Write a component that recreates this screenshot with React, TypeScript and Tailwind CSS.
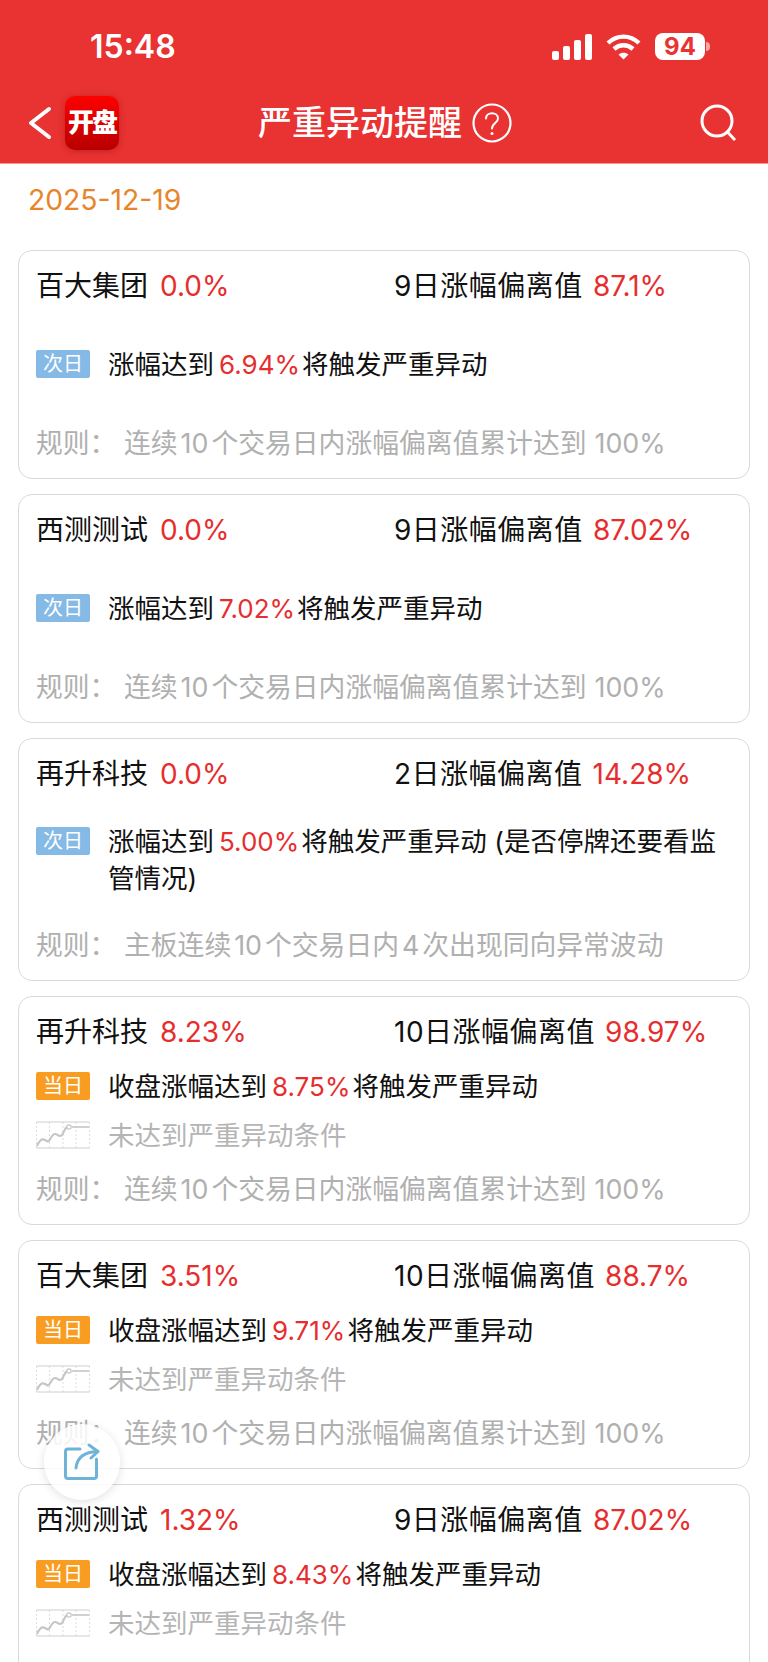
import React from 'react';

type Item = {
  name: string;
  pct: string;
  label: string;
  dev: string;
  kind: 'next' | 'today';
  prefix: string;
  target: string;
  suffix: string;
  rule: React.ReactNode;
};

const Gap: React.FC<{ children: React.ReactNode }> = ({ children }) => (
  <span className="mx-[3px]">{children}</span>
);

const defaultRule = (
  <>
    连续<Gap>10</Gap>个交易日内涨幅偏离值累计达到<span className="ml-[8px]">100%</span>
  </>
);

const items: Item[] = [
  { name: '百大集团', pct: '0.0%', label: '9日涨幅偏离值', dev: '87.1%', kind: 'next', prefix: '涨幅达到', target: '6.94%', suffix: '将触发严重异动', rule: defaultRule },
  { name: '西测测试', pct: '0.0%', label: '9日涨幅偏离值', dev: '87.02%', kind: 'next', prefix: '涨幅达到', target: '7.02%', suffix: '将触发严重异动', rule: defaultRule },
  {
    name: '再升科技', pct: '0.0%', label: '2日涨幅偏离值', dev: '14.28%', kind: 'next', prefix: '涨幅达到', target: '5.00%', suffix: '将触发严重异动 (是否停牌还要看监管情况)',
    rule: <>主板连续<Gap>10</Gap>个交易日内<Gap>4</Gap>次出现同向异常波动</>,
  },
  { name: '再升科技', pct: '8.23%', label: '10日涨幅偏离值', dev: '98.97%', kind: 'today', prefix: '收盘涨幅达到', target: '8.75%', suffix: '将触发严重异动', rule: defaultRule },
  { name: '百大集团', pct: '3.51%', label: '10日涨幅偏离值', dev: '88.7%', kind: 'today', prefix: '收盘涨幅达到', target: '9.71%', suffix: '将触发严重异动', rule: defaultRule },
  { name: '西测测试', pct: '1.32%', label: '9日涨幅偏离值', dev: '87.02%', kind: 'today', prefix: '收盘涨幅达到', target: '8.43%', suffix: '将触发严重异动', rule: defaultRule },
];

const MiniChart = () => (
  <svg width="54" height="28" viewBox="0 0 54 28" fill="none" className="shrink-0">
    <path d="M0.5 1H53.5M0.5 27H53.5" stroke="#cfcfcf" strokeWidth="1.2" />
    <path d="M0.5 1V27M13.5 1V27M27 1V27M40 1V27M53.5 1V27" stroke="#d4d4d4" strokeWidth="0.8" strokeDasharray="2 2" />
    <path d="M1 25C5 16 8 18 11 20C14 22 15 13 19 13C22 13 23 17 26 14C28 11 29 7 31 6" stroke="#c6c6c6" strokeWidth="2.2" />
    <circle cx="33" cy="6" r="2.2" stroke="#c6c6c6" strokeWidth="1.2" fill="#fff" />
    <path d="M36 6H53" stroke="#c6c6c6" strokeWidth="1.6" />
  </svg>
);

const Card: React.FC<{ item: Item }> = ({ item }) => (
  <div className="rounded-[14px] border border-[#d9d9d9] bg-white pl-[17px] pr-[30px] pt-[17px] pb-[17px] text-[26.5px] leading-[36px] text-[#111]">
    <div className="flex h-[36px] items-center whitespace-nowrap text-[28px]">
      <div className="flex w-[358px] items-center gap-[12px]">
        <span>{item.name}</span>
        <span className="text-[#e62e2e]">{item.pct}</span>
      </div>
      <div className="flex items-center gap-[10px]">
        <span className="tracking-[0.5px]">{item.label}</span>
        <span className="text-[#e62e2e]">{item.dev}</span>
      </div>
    </div>
    <div
      className={
        item.kind === 'next'
          ? 'flex min-h-[121px] flex-col justify-center gap-[12px] py-[31px]'
          : 'flex min-h-[121px] flex-col justify-center gap-[12px]'
      }
    >
      <div className="flex items-start">
        <span
          className={
            item.kind === 'next'
              ? 'mt-[4px] mr-[18px] flex h-[28px] w-[54px] shrink-0 items-center justify-center rounded-[2px] bg-[#85b9e6] text-[20px] leading-none text-white'
              : 'mt-[4px] mr-[18px] flex h-[28px] w-[54px] shrink-0 items-center justify-center rounded-[2px] bg-[#f99d22] text-[20px] leading-none text-white'
          }
        >
          {item.kind === 'next' ? '次日' : '当日'}
        </span>
        <div>
          {item.prefix}
          <span className="ml-[5px] mr-[2px] text-[26px] text-[#e62e2e]">{item.target}</span>
          {item.suffix}
        </div>
      </div>
      {item.kind === 'today' && (
        <div className="flex items-center text-[#b5b5b5]">
          <span className="mr-[18px] flex">
            <MiniChart />
          </span>
          <span>未达到严重异动条件</span>
        </div>
      )}
    </div>
    <div className="flex h-[36px] items-center whitespace-nowrap text-[26.8px] text-[#b0b0b0]">
      <span className="w-[88px] shrink-0">规则：</span>
      <span>{item.rule}</span>
    </div>
  </div>
);

const App: React.FC = () => {
  return (
    <div
      className="relative h-[1662px] w-[768px] overflow-hidden bg-white"
      style={{ fontFamily: 'Inter, "Noto Sans CJK SC", sans-serif' }}
    >
      <header className="h-[164px] border-b border-[#f29a9a] bg-[#e93232] text-white">
        <div className="flex h-[90px] items-center justify-between pt-[3px] pl-[90px] pr-[58px]">
          <span className="text-[32px] font-semibold leading-none">15:48</span>
          <div className="flex items-center gap-[14px]">
            <svg width="40" height="26" viewBox="0 0 40 26" fill="#fff">
              <rect x="0" y="17" width="7" height="9" rx="2" />
              <rect x="11" y="12" width="7" height="14" rx="2" />
              <rect x="22" y="6" width="7" height="20" rx="2" />
              <rect x="33" y="0" width="7" height="26" rx="2" />
            </svg>
            <svg width="35" height="26" viewBox="0 0 35 26" fill="none" stroke="#fff" strokeWidth="4.4">
              <path d="M2 9C11 0.5 24 0.5 33 9" />
              <path d="M8 15C13.5 10 21.5 10 27 15" />
              <path d="M17.5 25.5L12.5 20.5C15.5 18 19.5 18 22.5 20.5Z" fill="#fff" stroke="none" />
            </svg>
            <div className="flex items-center">
              <span className="flex h-[27px] w-[50px] items-center justify-center rounded-[8px] bg-white text-[24px] font-bold leading-none text-[#e93232]">
                94
              </span>
              <span className="ml-[1px] h-[9px] w-[4px] rounded-r-full bg-[#f5a5a5]" />
            </div>
          </div>
        </div>
        <div className="flex h-[73px] items-center pb-[7px] pl-[28px] pr-[32px]">
          <svg width="24" height="34" viewBox="0 0 24 34" fill="none" stroke="#fff" strokeWidth="4" strokeLinecap="round" strokeLinejoin="round" className="mr-[13px]">
            <path d="M21 3L3 17L21 31" />
          </svg>
          <div className="flex h-[54px] w-[54px] items-center justify-center rounded-[10px] bg-gradient-to-b from-[#ff0000] to-[#b80000] text-[26px] font-black leading-none tracking-[-2px] shadow-[0_1px_6px_rgba(120,0,0,0.35)]">
            开盘
          </div>
          <div className="ml-[139px] flex items-center">
            <span className="text-[34px] font-medium leading-none">严重异动提醒</span>
            <svg width="40" height="40" viewBox="0 0 40 40" fill="none" stroke="#fff" className="ml-[10px]">
              <circle cx="20" cy="20" r="18.5" strokeWidth="2.2" />
              <path d="M14 15.5C14 8.5 26 8.5 26 15.5C26 20 20 20 20 25.5" strokeWidth="2" strokeLinecap="round" />
              <circle cx="20" cy="30.5" r="1.5" fill="#fff" stroke="none" />
            </svg>
          </div>
          <svg width="36" height="38" viewBox="0 0 36 38" fill="none" stroke="#fff" strokeWidth="3" className="ml-auto">
            <circle cx="17" cy="17" r="15" />
            <path d="M27.5 28L34 35" strokeLinecap="square" />
          </svg>
        </div>
      </header>

      <div className="flex h-[70px] items-start pl-[28px] pt-[18px] text-[28.3px] leading-[36px] text-[#e8852a]">
        2025-12-19
      </div>

      <div className="flex flex-col gap-[15px] pl-[18px] pr-[18px] pt-[16px]">
        {items.map((item, i) => (
          <Card key={i} item={item} />
        ))}
      </div>

      {/* floating share button */}
      <div className="absolute left-[44px] top-[1424px] flex h-[76px] w-[76px] items-center justify-center rounded-full bg-white/85 shadow-[0_2px_10px_rgba(0,0,0,0.12)]">
        <svg width="36" height="38" viewBox="0 0 36 38" fill="none" stroke="#6fb3d9" strokeWidth="3" strokeLinecap="round" strokeLinejoin="round">
          <path d="M16 6H4C2.5 6 1.5 7 1.5 8.5V33C1.5 34.5 2.5 35.5 4 35.5H30C31.5 35.5 32.5 34.5 32.5 33V16" />
          <path d="M12 25C13 15 20 9 33 8.5" />
          <path d="M25 2L34 8.5L27 15" />
        </svg>
      </div>
    </div>
  );
};

export default App;
